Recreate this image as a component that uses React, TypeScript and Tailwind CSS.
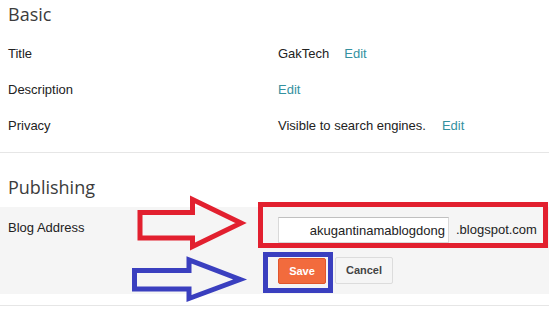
import * as React from 'react';

const sans = { fontFamily: '"Liberation Sans", Arial, sans-serif' };
const head = { fontFamily: '"Open Sans", "Liberation Sans", sans-serif' };

function Row({ label, children }: { label: string; children?: React.ReactNode }) {
  return (
    <div className="grid h-9 grid-cols-[278px_1fr] items-center text-[13px] text-[#222]">
      <div className="pl-2">{label}</div>
      <div className="flex items-center">{children}</div>
    </div>
  );
}

function EditLink({ className = '' }: { className?: string }) {
  return <a className={`cursor-pointer text-[#35919f] ${className}`}>Edit</a>;
}

function Annotations() {
  return (
    <>
      <div className="pointer-events-none absolute left-[258px] top-[202px] h-[46px] w-[290px] border-[5px] border-[#e2202f]" />
      <div className="pointer-events-none absolute left-[263px] top-[252px] h-[41px] w-[70px] border-[5px] border-[#3a3fbf]" />
      <svg className="pointer-events-none absolute left-0 top-0" width="549" height="315" viewBox="0 0 549 315">
        <polygon
          points="140,212.5 192.5,212.5 192.5,199.5 241,223 192.5,246.5 192.5,238 140,238"
          fill="none"
          stroke="#e2202f"
          strokeWidth="5"
        />
        <polygon
          points="134.5,270.5 189,270.5 189,260 240,279.5 189,298.5 189,289 134.5,289"
          fill="none"
          stroke="#3a3fbf"
          strokeWidth="5"
        />
      </svg>
    </>
  );
}

export default function App() {
  return (
    <div className="relative h-[315px] w-full overflow-hidden bg-white" style={sans}>
      <section className="border-b border-[#e6e6e6] pb-2">
        <h2 className="pl-2 pt-[2px] text-[18px] leading-6 text-[#3c3c3c]" style={head}>
          Basic
        </h2>
        <div className="mt-[10px]">
          <Row label="Title">
            <span>GakTech</span>
            <EditLink className="ml-[15px]" />
          </Row>
          <Row label="Description">
            <EditLink />
          </Row>
          <Row label="Privacy">
            <span>Visible to search engines.</span>
            <EditLink className="ml-[16px]" />
          </Row>
        </div>
      </section>

      <section className="border-b border-[#e6e6e6] pb-[11px]">
        <h2 className="pl-2 pt-[22px] text-[18px] leading-6 text-[#3c3c3c]" style={head}>
          Publishing
        </h2>
        <div className="mt-2 grid grid-cols-[278px_1fr] bg-[#f5f5f5] pb-[10px] pt-[10px] text-[13px] text-[#222]">
          <div className="pl-2 pt-px">Blog Address</div>
          <div>
            <div className="flex h-[26px] items-center">
              <input
                readOnly
                value="akugantinamablogdong"
                className="h-[26px] w-[171px] border border-[#d9d9d9] border-t-[#c0c0c0] bg-white px-[3px] text-right text-[13px] text-[#222] outline-none"
                style={sans}
              />
              <span className="ml-[7px]">.blogspot.com</span>
            </div>
            <div className="mt-[14px] flex items-end gap-[9px]">
              <button className="h-[26px] w-[48px] rounded-[2px] border border-[#e0552c] bg-[#f26b3d] text-[11px] font-bold text-white">
                Save
              </button>
              <button className="h-[27px] w-[58px] rounded-[2px] border border-[#dcdcdc] bg-[#f5f5f5] text-[11px] font-bold text-[#444]">
                Cancel
              </button>
            </div>
          </div>
        </div>
      </section>

      <Annotations />
    </div>
  );
}
